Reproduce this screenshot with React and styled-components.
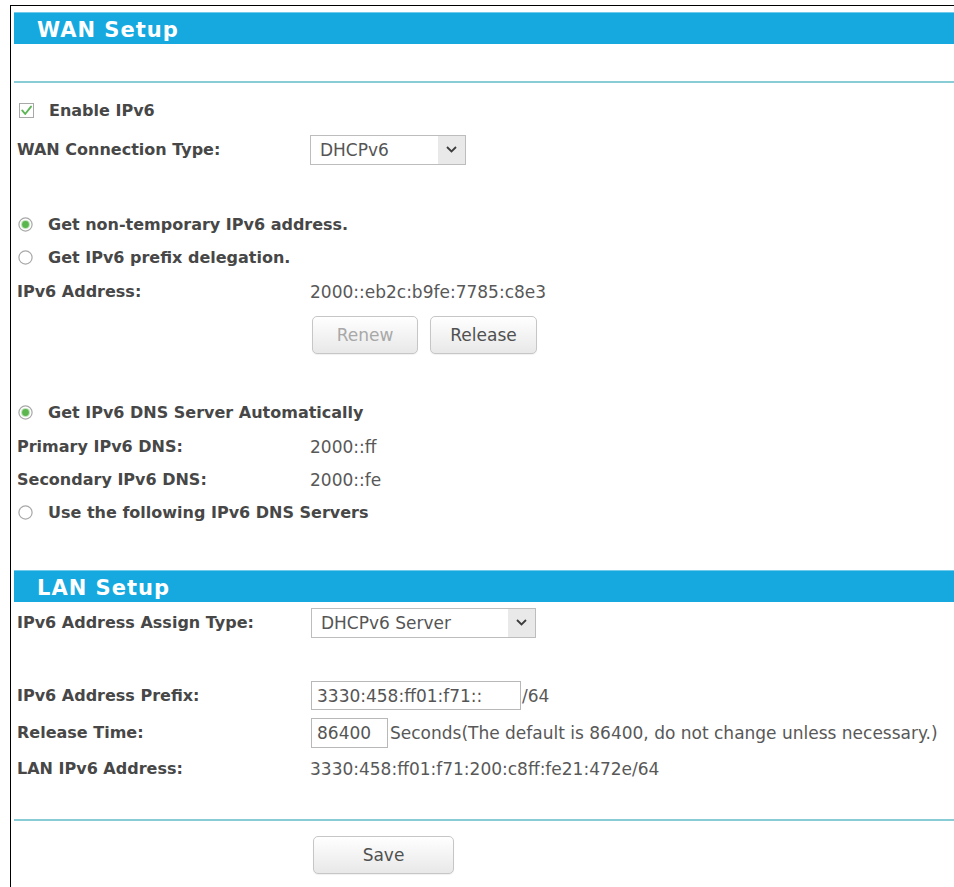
import React from 'react'
import styled, { createGlobalStyle } from 'styled-components'

const GlobalStyle = createGlobalStyle`
  html, body {
    margin: 0;
    padding: 0;
    background: #fff;
  }
  body {
    font-family: "DejaVu Sans", Verdana, sans-serif;
    overflow: hidden;
  }
`

const CheckIcon = () => (
  <svg width="15" height="15" viewBox="0 0 15 15">
    <rect x="0.5" y="0.5" width="14" height="14" fill="#fff" stroke="#a8a8a8" />
    <polyline
      points="3.2,7.4 6.2,11 12,3.6"
      fill="none"
      stroke="#5db656"
      strokeWidth="1.9"
      strokeLinecap="round"
      strokeLinejoin="round"
    />
  </svg>
)

const RadioIcon = ({ checked }) => (
  <svg width="15" height="15" viewBox="0 0 15 15">
    <circle cx="7.5" cy="7.5" r="6.6" fill="#fff" stroke="#a8a8a8" strokeWidth="1.2" />
    {checked && <circle cx="7.5" cy="7.5" r="4.6" fill="#c3e5bd" />}
    {checked && <circle cx="7.5" cy="7.5" r="3.4" fill="#5cb64f" />}
  </svg>
)

const Chevron = () => (
  <svg width="11" height="7" viewBox="0 0 11 7">
    <polyline
      points="1,1 5.5,5.5 10,1"
      fill="none"
      stroke="#3d3d3d"
      strokeWidth="1.8"
    />
  </svg>
)

const App = () => {
  return (
    <React.Fragment>
      <GlobalStyle />
      <Frame>
        <SectionHeader>WAN Setup</SectionHeader>
        <Divider $mt={37} />

        <Row $mt={11}>
          <Choice $indent={2}>
            <CheckIcon />
            <span>Enable IPv6</span>
          </Choice>
        </Row>
        <Row $mt={6}>
          <Label>WAN Connection Type:</Label>
          <SelectBox $w={156}>
            <SelectText>DHCPv6</SelectText>
            <ArrowBox>
              <Chevron />
            </ArrowBox>
          </SelectBox>
        </Row>

        <Row $mt={42}>
          <Choice $indent={1}>
            <RadioIcon checked />
            <span>Get non-temporary IPv6 address.</span>
          </Choice>
        </Row>
        <Row>
          <Choice $indent={1}>
            <RadioIcon />
            <span>Get IPv6 prefix delegation.</span>
          </Choice>
        </Row>
        <Row $mt={1}>
          <Label>IPv6 Address:</Label>
          <Value>2000::eb2c:b9fe:7785:c8e3</Value>
        </Row>
        <Row $mt={8} $h={38}>
          <ButtonGroup $indent={295}>
            <Button $disabled $w={106}>Renew</Button>
            <Button $w={107}>Release</Button>
          </ButtonGroup>
        </Row>

        <Row $mt={42}>
          <Choice $indent={1}>
            <RadioIcon checked />
            <span>Get IPv6 DNS Server Automatically</span>
          </Choice>
        </Row>
        <Row $mt={1}>
          <Label>Primary IPv6 DNS:</Label>
          <Value>2000::ff</Value>
        </Row>
        <Row>
          <Label>Secondary IPv6 DNS:</Label>
          <Value>2000::fe</Value>
        </Row>
        <Row>
          <Choice $indent={1}>
            <RadioIcon />
            <span>Use the following IPv6 DNS Servers</span>
          </Choice>
        </Row>

        <SectionHeader $mt={41}>LAN Setup</SectionHeader>
        <Row $mt={4}>
          <Label>IPv6 Address Assign Type:</Label>
          <SelectBox $w={225} $shift={1}>
            <SelectText>DHCPv6 Server</SelectText>
            <ArrowBox>
              <Chevron />
            </ArrowBox>
          </SelectBox>
        </Row>
        <Row $mt={40}>
          <Label>IPv6 Address Prefix:</Label>
          <TextInput $w={210} readOnly value="3330:458:ff01:f71::" />
          <Value $gap={1}>/64</Value>
        </Row>
        <Row $mt={4}>
          <Label>Release Time:</Label>
          <TextInput $w={77} $h={30} readOnly value="86400" />
          <Value $gap={2}>
            Seconds(The default is 86400, do not change unless necessary.)
          </Value>
        </Row>
        <Row $mt={3}>
          <Label>LAN IPv6 Address:</Label>
          <Value>3330:458:ff01:f71:200:c8ff:fe21:472e/64</Value>
        </Row>

        <Divider $mt={34} />
        <Row $mt={15} $h={38}>
          <ButtonGroup $indent={296}>
            <Button $w={141}>Save</Button>
          </ButtonGroup>
        </Row>
      </Frame>
    </React.Fragment>
  )
}

const Frame = styled.div`
  margin: 5px 0 0 10px;
  border-top: 1px solid #000;
  border-left: 1px solid #000;
  padding: 6px 0 0 3px;
  min-height: calc(100vh - 5px);
  box-sizing: border-box;
`

const SectionHeader = styled.div`
  display: flex;
  align-items: center;
  height: 32px;
  margin-top: ${p => p.$mt || 0}px;
  padding: 2px 0 0 23px;
  background-color: #15a9e0;
  border-top: 1px solid #6fcaeb;
  box-sizing: border-box;
  color: #fff;
  font-family: "DejaVu Sans", Verdana, sans-serif;
  font-weight: bold;
  font-size: 21px;
  letter-spacing: 1px;
`

const Divider = styled.div`
  height: 2px;
  margin-top: ${p => p.$mt || 0}px;
  background-color: #88ccd6;
`

const Row = styled.div`
  display: flex;
  align-items: center;
  height: ${p => p.$h || 33}px;
  margin-top: ${p => p.$mt || 0}px;
  padding-left: 3px;
`

const Label = styled.div`
  width: 293px;
  flex-shrink: 0;
  color: #474747;
  font-weight: bold;
  font-size: 16px;
`

const Choice = styled.label`
  display: flex;
  align-items: center;
  gap: 15px;
  padding-left: ${p => p.$indent || 0}px;
  color: #474747;
  font-weight: bold;
  font-size: 16px;

  & > svg {
    flex-shrink: 0;
  }
`

const Value = styled.div`
  margin-left: ${p => p.$gap || 0}px;
  color: #585858;
  font-size: 17px;
  white-space: nowrap;
`

const SelectBox = styled.div`
  display: flex;
  align-items: stretch;
  width: ${p => p.$w}px;
  height: 30px;
  margin-left: ${p => p.$shift || 0}px;
  border: 1px solid #bdbdbd;
  box-sizing: border-box;
  background: #fff;
`

const SelectText = styled.div`
  display: flex;
  align-items: center;
  flex: 1;
  padding-left: 9px;
  color: #555;
  font-size: 17px;
`

const ArrowBox = styled.div`
  display: flex;
  align-items: center;
  justify-content: center;
  width: 27px;
  background-color: #e9e9e9;
`

const TextInput = styled.input`
  width: ${p => p.$w}px;
  height: ${p => p.$h || 29}px;
  margin: 0 0 0 1px;
  padding: 0 0 0 5px;
  border: 1px solid #b8b8b8;
  border-radius: 0;
  box-sizing: border-box;
  outline: none;
  color: #555;
  font-family: "DejaVu Sans", Verdana, sans-serif;
  font-size: 17px;
`

const ButtonGroup = styled.div`
  display: flex;
  gap: 12px;
  margin-left: ${p => p.$indent || 0}px;
`

const Button = styled.button`
  width: ${p => p.$w}px;
  height: 38px;
  padding: 0;
  border: 1px solid #c6c6c6;
  border-radius: 5px;
  background: linear-gradient(#ffffff, #e8e8e8);
  box-shadow: 0 1px 1px rgba(0, 0, 0, 0.06);
  color: ${p => (p.$disabled ? '#a8a8a8' : '#505050')};
  font-family: "DejaVu Sans", Verdana, sans-serif;
  font-size: 17px;
  cursor: ${p => (p.$disabled ? 'default' : 'pointer')};
`

export default App
